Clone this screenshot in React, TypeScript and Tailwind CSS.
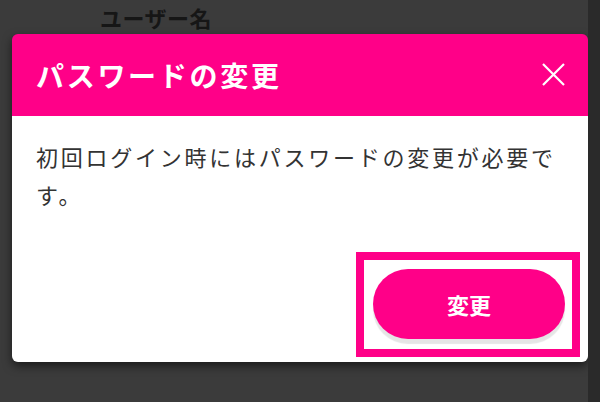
export default function App() {
	return (
		<div className="flex h-[402px] w-[600px] overflow-hidden font-['Noto_Sans_CJK_JP','Noto_Sans',sans-serif]">
			<div className="flex-1 bg-[#3b3b3b] flex flex-col">
				<div className="h-[34px] pl-[100px] pt-[2px] text-[22px] leading-[30px] font-bold text-[#161616] tracking-[0.5px]">
					ユーザー名
				</div>
				<div className="ml-3 rounded-[6px] overflow-hidden shadow-[0_4px_10px_rgba(0,0,0,0.55)]">
					<div className="h-[82px] bg-[#ff0088] flex items-center justify-between pl-6 pr-[23px]">
						<h2 className="text-[28px] font-bold text-white tracking-[2.7px] leading-none">パスワードの変更</h2>
						<svg width="23" height="23" viewBox="0 0 23 23" className="mt-[-2px]">
							<path d="M1 1 L22 22 M22 1 L1 22" stroke="white" strokeWidth="2.2" />
						</svg>
					</div>
					<div className="h-[246px] bg-white flex flex-col px-6 pt-[21px]">
						<p className="text-[22px] leading-[38px] tracking-[2.75px] text-[#333]">
							初回ログイン時にはパスワードの変更が必要です。
						</p>
						<div className="mt-auto mb-[5px] mr-[-16px] self-end border-[8px] border-[#ff0088] pt-[9px] pb-[10px] pl-[9px] pr-[7px]">
							<button className="w-[192px] h-[70px] rounded-full bg-[#ff0088] text-white text-[22px] font-bold shadow-[0_5px_1px_rgba(0,0,0,0.1)]">
								変更
							</button>
						</div>
					</div>
				</div>
			</div>
			<div className="w-3 bg-[#2a2a2a]" />
		</div>
	)
}
